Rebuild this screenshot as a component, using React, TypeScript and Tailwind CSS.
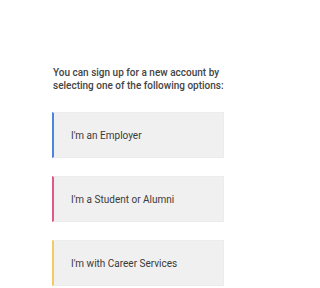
const options = [
  { label: "I'm an Employer", border: "border-l-[#4a86e0]" },
  { label: "I'm a Student or Alumni", border: "border-l-[#df5a84]" },
  { label: "I'm with Career Services", border: "border-l-[#f1cb62]" },
];

export default function App() {
  return (
    <div className="w-[288px] h-[288px] bg-white overflow-hidden font-['Roboto',sans-serif]">
      <div className="ml-[52px] w-[172px] pt-[66px]">
        <p className="text-[10px] leading-[13px] font-medium text-[#444444] pl-[1px]">
          You can sign up for a new account by selecting one of the following options:
        </p>
        <div className="mt-[20px] flex flex-col gap-[18px]">
          {options.map((o) => (
            <div
              key={o.label}
              className={`h-[46px] flex items-center pl-[17px] bg-[#f0f0f0] border border-[#ececec] border-l-2 ${o.border}`}
            >
              <span className="text-[10px] text-[#3a3a3a]">{o.label}</span>
            </div>
          ))}
        </div>
      </div>
    </div>
  );
}
